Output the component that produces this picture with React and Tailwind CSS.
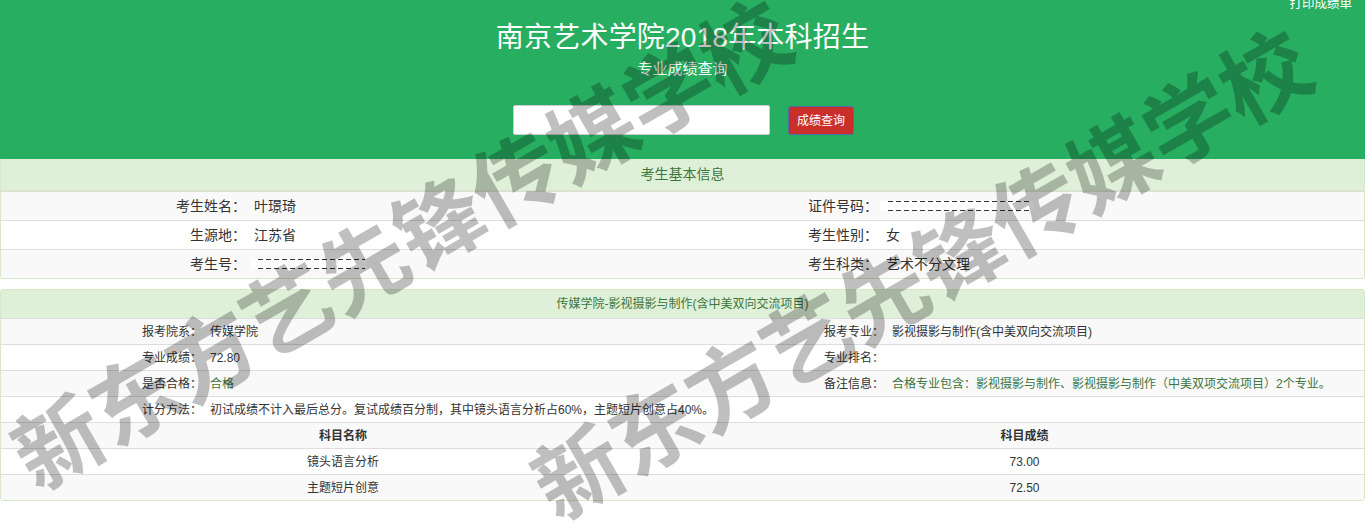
const FONT = "font-['Arial','Liberation_Sans','Noto_Sans_CJK_SC',sans-serif]";

const WATERMARK = '新东方艺先锋传媒学校';

function Dashes({ inset }) {
  return (
    <span className={`block h-px bg-[repeating-linear-gradient(90deg,#333_0_5px,transparent_5px_8px)] ${inset}`} />
  );
}

// redacted value: white strip with a dashed line above and below
function Masked({ width, inset }) {
  return (
    <span className={`flex h-[10px] flex-col justify-between bg-white ${width}`}>
      <Dashes inset={inset} />
      <Dashes inset={inset} />
    </span>
  );
}

function InfoRow({ cells, striped }) {
  return (
    <div className={`flex h-[29px] items-center border-t border-[#ddd] text-[14px] ${striped ? 'bg-[#f9f9f9]' : 'bg-white'}`}>
      <span className="w-[245px] text-right">{cells[0]}：</span>
      <span className="w-[386px] pl-[8px]">{cells[1]}</span>
      <span className="w-[246px] text-right">{cells[2]}：</span>
      <span className="pl-[8px]">{cells[3]}</span>
    </div>
  );
}

function ScoreRow({ cells, striped }) {
  return (
    <div className={`flex h-[26px] items-center border-t border-[#ddd] text-[12px] ${striped ? 'bg-[#f9f9f9]' : 'bg-white'}`}>
      <span className="w-[201px] text-right">{cells[0]}：</span>
      <span className="w-[480px] pl-[8px]">{cells[1]}</span>
      <span className="w-[202px] text-right">{cells[2]}：</span>
      <span className={`pl-[8px] ${cells[4] ? 'text-[#3c763d]' : ''}`}>{cells[3]}</span>
    </div>
  );
}

function SubjectRow({ cells, striped, head }) {
  return (
    <div className={`grid h-[26px] grid-cols-[684px_1fr] items-center border-t border-[#ddd] text-center text-[12px] ${head ? 'font-bold' : ''} ${striped ? 'bg-[#f9f9f9]' : 'bg-white'}`}>
      <span>{cells[0]}</span>
      <span>{cells[1]}</span>
    </div>
  );
}

function Watermark({ className }) {
  return (
    <div
      className={`pointer-events-none absolute flex h-[90px] w-[880px] origin-left -rotate-30 items-center justify-between text-[88px] leading-none font-bold text-black/25 ${className}`}
    >
      {WATERMARK.split('').map((ch, i) => (
        <span key={i}>{ch}</span>
      ))}
    </div>
  );
}

export default function App() {
  return (
    <div className={`relative h-[529px] overflow-hidden bg-white text-[#333] ${FONT}`}>
      <header className="relative flex h-[159px] flex-col items-center bg-[#27ae60] text-white">
        <a className="absolute top-[-5px] right-[13px] text-[12.5px] leading-[18px]">打印成绩单</a>
        <h1 className="mt-[20px] text-[28px] leading-[36px] font-normal tracking-[0.2px]">南京艺术学院2018年本科招生</h1>
        <p className="mt-[4px] text-[15px] leading-[18px]">专业成绩查询</p>
        <div className="mt-[27px] ml-[2px] flex items-center">
          <input className="h-[30px] w-[257px] rounded-[2px] border border-[#ccc] bg-white" />
          <button
            type="button"
            className="mt-[1px] ml-[18px] h-[29px] w-[66px] rounded-[3px] border border-[#4a6fa5] bg-[#c9302c] text-[12px] text-white"
          >
            成绩查询
          </button>
        </div>
      </header>

      <section className="rounded-b-[3px] border border-t-0 border-[#d6e9c6]">
        <div className="flex h-[32px] items-center justify-center border-b border-[#d6e9c6] bg-[#dff0d8] text-[14px] text-[#3c763d]">
          考生基本信息
        </div>
        <InfoRow striped cells={['考生姓名', '叶璟琦', '证件号码', <Masked width="-ml-[6px] w-[154px]" inset="mr-[4px] ml-[8px]" />]} />
        <InfoRow cells={['生源地', '江苏省', '考生性别', '女']} />
        <InfoRow striped cells={['考生号', <Masked width="-ml-[3px] w-[116px]" inset="mr-[2px] ml-[7px]" />, '考生科类', '艺术不分文理']} />
      </section>

      <section className="mt-[10px] rounded-[3px] border border-[#d6e9c6]">
        <div className="flex h-[28px] items-center justify-center bg-[#dff0d8] text-[12px] text-[#3c763d]">
          传媒学院-影视摄影与制作(含中美双向交流项目)
        </div>
        <ScoreRow striped cells={['报考院系', '传媒学院', '报考专业', '影视摄影与制作(含中美双向交流项目)']} />
        <ScoreRow cells={['专业成绩', '72.80', '专业排名', '']} />
        <ScoreRow
          striped
          cells={[
            '是否合格',
            <span className="text-[#3c763d]">合格</span>,
            '备注信息',
            '合格专业包含：影视摄影与制作、影视摄影与制作（中美双项交流项目）2个专业。',
            true,
          ]}
        />
        <div className="flex h-[26px] items-center border-t border-[#ddd] bg-white text-[12px]">
          <span className="w-[201px] text-right">计分方法：</span>
          <span className="pl-[8px]">初试成绩不计入最后总分。复试成绩百分制，其中镜头语言分析占60%，主题短片创意占40%。</span>
        </div>
        <SubjectRow head striped cells={['科目名称', '科目成绩']} />
        <SubjectRow cells={['镜头语言分析', '73.00']} />
        <SubjectRow striped cells={['主题短片创意', '72.50']} />
      </section>

      <Watermark className="top-[422px] left-[22px]" />
      <Watermark className="top-[452px] left-[542px]" />
    </div>
  );
}
